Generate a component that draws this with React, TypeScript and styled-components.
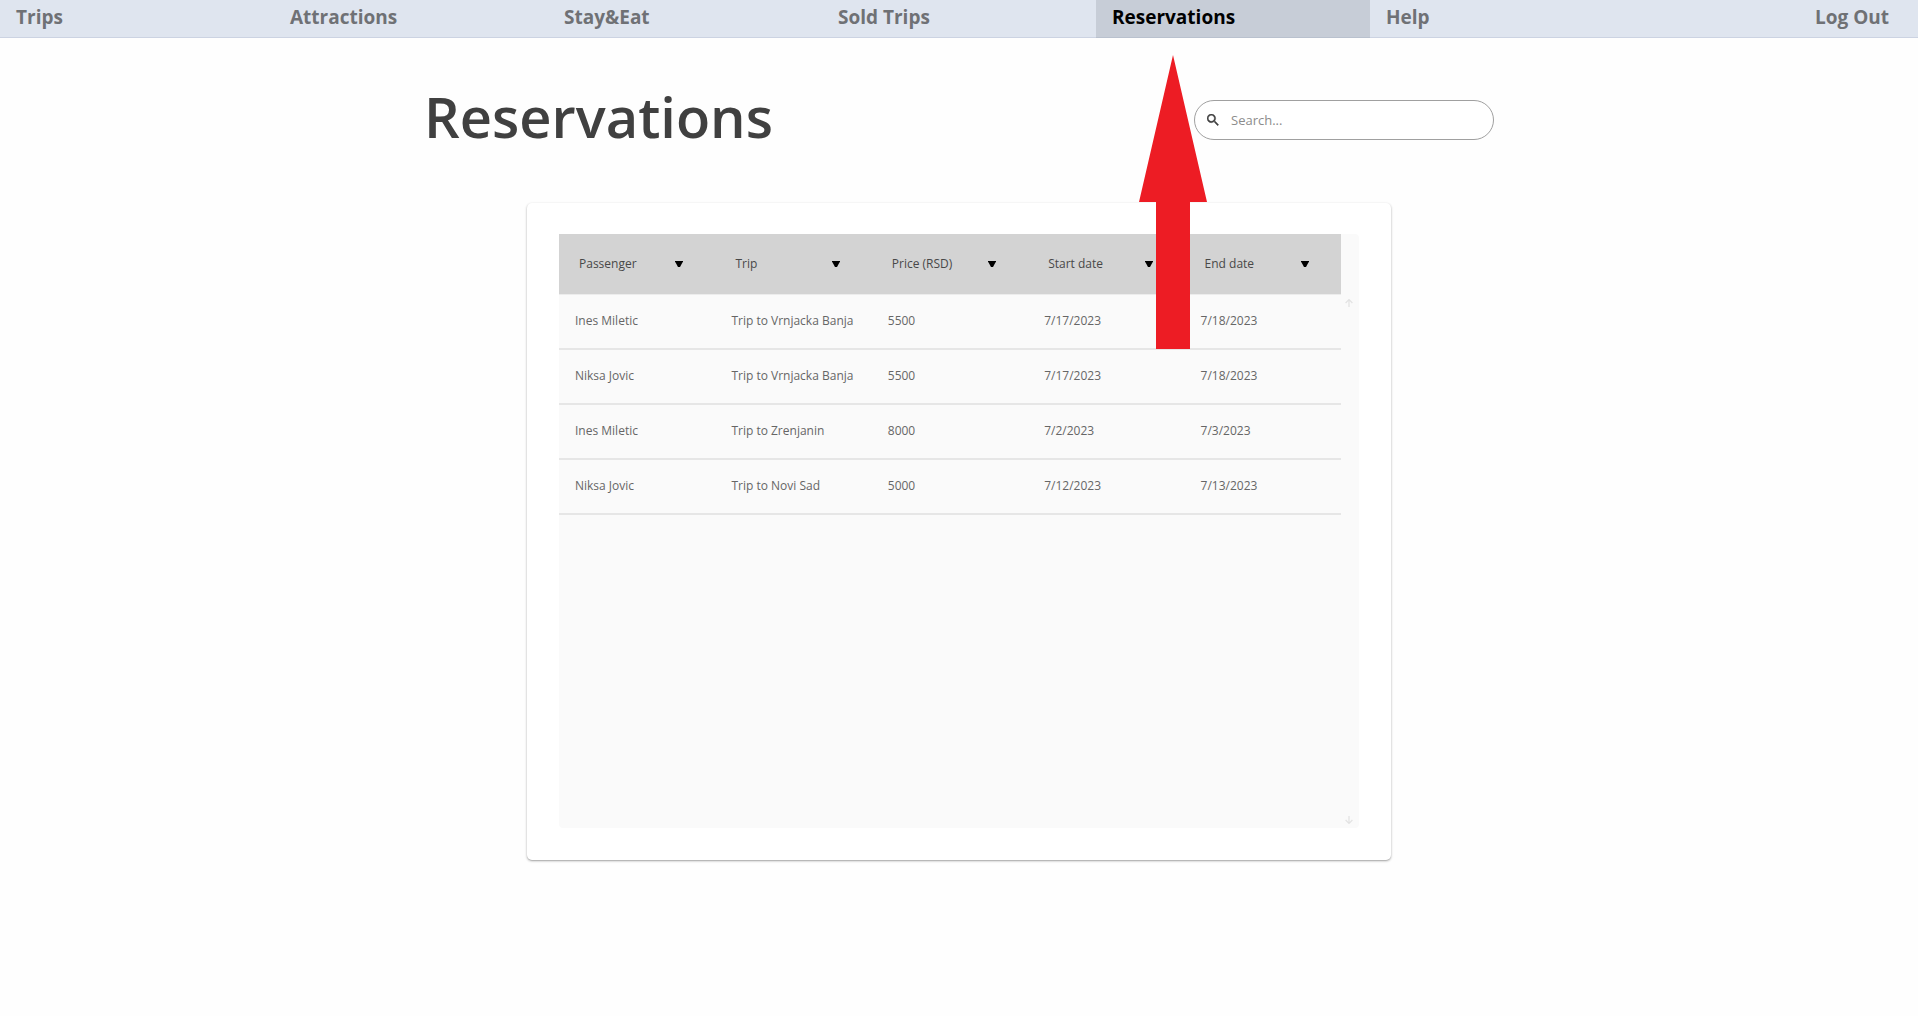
import React, { useState } from 'react';
import styled, { createGlobalStyle } from 'styled-components';

const GlobalStyle = createGlobalStyle`
  * { box-sizing: border-box; }
  body {
    margin: 0;
    background: #fefefe;
    font-family: "Segoe UI", "Open Sans", "Noto Sans", sans-serif;
  }
`;

const NavBar = styled.nav`
  display: grid;
  grid-template-columns: repeat(7, 1fr);
  height: 38px;
  background: #dfe5ef;
`;

const NavLink = styled.a<{ $active?: boolean; $end?: boolean }>`
  display: flex;
  align-items: center;
  justify-content: ${(p) => (p.$end ? 'flex-end' : 'flex-start')};
  padding: 0 ${(p) => (p.$end ? 29 : 16)}px 4px 16px;
  border-bottom: 1px solid ${(p) => (p.$active ? '#b9c1ce' : '#ccd3e2')};
  background: ${(p) => (p.$active ? '#c7cdd7' : 'transparent')};
  color: ${(p) => (p.$active ? '#000' : '#6f7175')};
  font-size: 19px;
  font-weight: 700;
  line-height: 24px;
  text-decoration: none;
`;

const Page = styled.main`
  display: flex;
  flex-direction: column;
  align-items: center;
  padding: 42px 24px;
`;

const PageHeader = styled.header`
  display: flex;
  align-items: center;
  justify-content: space-between;
  width: 100%;
  max-width: 1070px;
  height: 80px;
`;

const Title = styled.h1`
  margin: 0;
  padding-bottom: 8px;
  color: #404040;
  font-size: 56px;
  font-weight: 600;
  line-height: 72px;
`;

const SearchBox = styled.label`
  display: flex;
  align-items: center;
  gap: 12px;
  width: 300px;
  height: 40px;
  padding: 0 12px;
  border: 1px solid #a0a0a0;
  border-radius: 20px;
  background: #fff;
`;

const SearchInput = styled.input`
  flex: 1;
  min-width: 0;
  padding: 0;
  border: 0;
  outline: 0;
  background: transparent;
  color: #404040;
  font: inherit;
  font-size: 13px;
  line-height: 20px;
  &::placeholder { color: #8c8c8c; opacity: 1; }
`;

const Card = styled.section`
  width: 100%;
  max-width: 864px;
  margin-top: 43px;
  padding: 31px 32px 32px;
  border-radius: 5px;
  background: #fff;
  box-shadow: 0 1px 2px 1px rgba(0, 0, 0, 0.12), 0 1px 1px rgba(0, 0, 0, 0.2);
`;

const TableArea = styled.div`
  display: flex;
  min-height: 594px;
  border-radius: 4px;
  background: #fafafa;
`;

const TableSide = styled.div`
  flex: 1;
`;

const Table = styled.table`
  width: 100%;
  border-collapse: separate;
  border-spacing: 0;
  table-layout: fixed;
  font-size: 12px;
  line-height: 20px;
`;

const HeadCell = styled.th`
  height: 61px;
  padding: 0 32px 0 20px;
  border-bottom: 1px solid #ececec;
  background: #d3d3d3;
  color: #484848;
  font-weight: 400;
  text-align: left;
`;

const SortButton = styled.button`
  display: flex;
  align-items: center;
  justify-content: space-between;
  width: 100%;
  padding: 0;
  border: 0;
  background: none;
  color: inherit;
  font: inherit;
  white-space: nowrap;
`;

const Cell = styled.td`
  height: 55px;
  padding: 0 0 2px 16px;
  border-bottom: 2px solid #e6e6e6;
  color: #666;
  white-space: nowrap;
`;

const ScrollRail = styled.div`
  display: flex;
  flex-direction: column;
  align-items: center;
  justify-content: space-between;
  width: 18px;
  padding: 65px 2px 4px 0;
`;

const ScrollButton = styled.button`
  display: flex;
  padding: 0;
  border: 0;
  background: none;
`;

const Pointer = styled.svg`
  position: absolute;
  top: 55px;
  left: calc(50% + 180px);
  pointer-events: none;
`;

const links = ['Trips', 'Attractions', 'Stay&Eat', 'Sold Trips', 'Reservations', 'Help', 'Log Out'];
const columns = ['Passenger', 'Trip', 'Price (RSD)', 'Start date', 'End date'];
const reservations = [
  ['Ines Miletic', 'Trip to Vrnjacka Banja', '5500', '7/17/2023', '7/18/2023'],
  ['Niksa Jovic', 'Trip to Vrnjacka Banja', '5500', '7/17/2023', '7/18/2023'],
  ['Ines Miletic', 'Trip to Zrenjanin', '8000', '7/2/2023', '7/3/2023'],
  ['Niksa Jovic', 'Trip to Novi Sad', '5000', '7/12/2023', '7/13/2023'],
];

const SearchIcon = () => (
  <svg width="12" height="12" viewBox="3 3 18 18" fill="#404040" stroke="#404040" strokeWidth="0.6" aria-hidden="true">
    <path d="M15.5 14h-.79l-.28-.27A6.47 6.47 0 0 0 16 9.5 6.5 6.5 0 1 0 9.5 16c1.61 0 3.09-.59 4.23-1.57l.27.28v.79l5 4.99L20.49 19l-4.99-5zm-6 0C7.01 14 5 11.99 5 9.5S7.01 5 9.5 5 14 7.01 14 9.5 11.99 14 9.5 14z" />
  </svg>
);

const SortIcon = () => (
  <svg width="8" height="6" viewBox="0 0 8 6" aria-hidden="true">
    <path d="M0 0h8v.6L5 6H3L0 .6z" fill="#000" />
  </svg>
);

const ScrollIcon = ({ down }: { down?: boolean }) => (
  <svg width="8" height="8" viewBox="0 0 8 8" fill="none" stroke="#e2e2e2" strokeWidth="1.2" aria-hidden="true">
    <path d={down ? 'M4 0v7.4M.6 4 4 7.4 7.4 4' : 'M4 8V.6M.6 4 4 .6 7.4 4'} />
  </svg>
);

export default function App() {
  const [query, setQuery] = useState('');
  const rows = reservations.filter((r) => r.join(' ').toLowerCase().includes(query.toLowerCase()));

  return (
    <>
      <GlobalStyle />
      <NavBar>
        {links.map((label) => (
          <NavLink key={label} href="#" $active={label === 'Reservations'} $end={label === 'Log Out'}>
            {label}
          </NavLink>
        ))}
      </NavBar>
      <Page>
        <PageHeader>
          <Title>Reservations</Title>
          <SearchBox>
            <SearchIcon />
            <SearchInput
              aria-label="Search reservations"
              placeholder="Search..."
              value={query}
              onChange={(e) => setQuery(e.target.value)}
            />
          </SearchBox>
        </PageHeader>
        <Card>
          <TableArea>
            <TableSide>
              <Table>
                <thead>
                  <tr>
                    {columns.map((name) => (
                      <HeadCell key={name} scope="col">
                        <SortButton type="button">
                          {name}
                          <SortIcon />
                        </SortButton>
                      </HeadCell>
                    ))}
                  </tr>
                </thead>
                <tbody>
                  {rows.map((row, i) => (
                    <tr key={i}>
                      {row.map((value, j) => (
                        <Cell key={j}>{value}</Cell>
                      ))}
                    </tr>
                  ))}
                </tbody>
              </Table>
            </TableSide>
            <ScrollRail>
              <ScrollButton type="button" aria-label="Scroll up">
                <ScrollIcon />
              </ScrollButton>
              <ScrollButton type="button" aria-label="Scroll down">
                <ScrollIcon down />
              </ScrollButton>
            </ScrollRail>
          </TableArea>
        </Card>
      </Page>
      <Pointer width="68" height="294" viewBox="0 0 68 294" aria-hidden="true">
        <path d="M34 0 68 147H51V294H17V147H0z" fill="#ed1c24" />
      </Pointer>
    </>
  );
}
